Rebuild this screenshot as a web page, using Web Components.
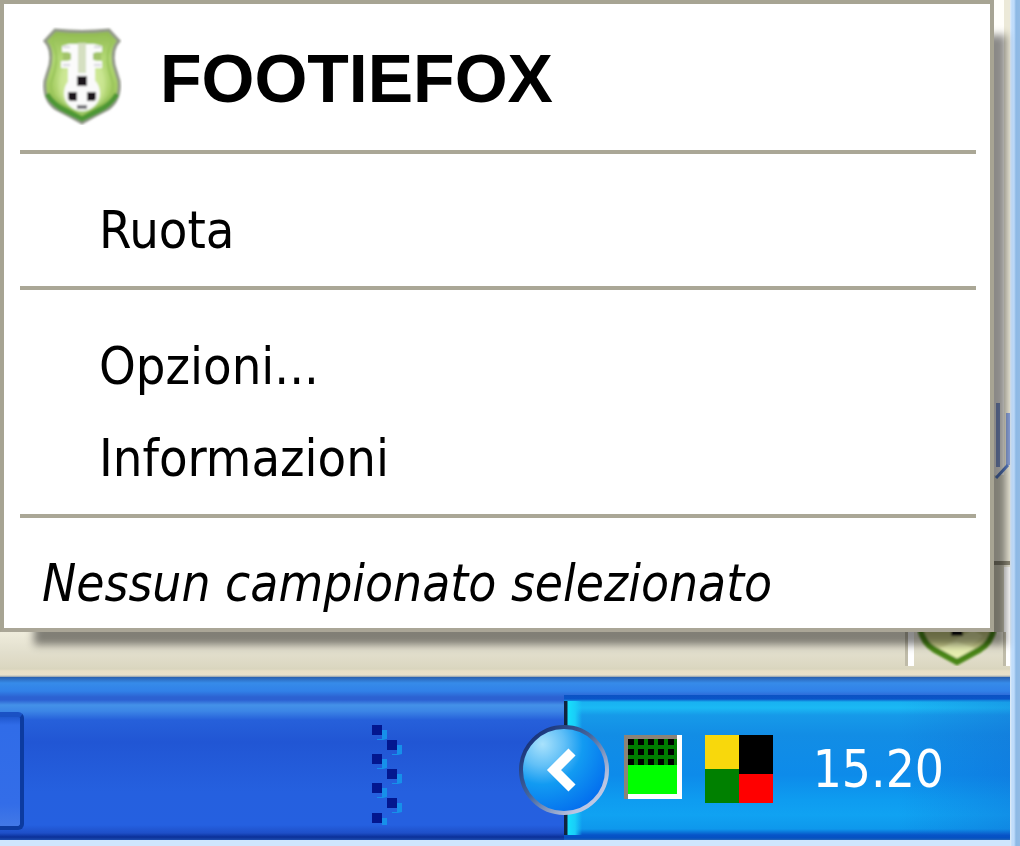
<!DOCTYPE html>
<html lang="it">
<head>
<meta charset="utf-8">
<title>FootieFox</title>
<style>
body { margin: 0; font-family: "DejaVu Sans Condensed", "DejaVu Sans", sans-serif; font-size: 51px; color: #000; }
</style>
</head>
<body>
<xp-desktop>
  <xp-menu slot="menu">
    <menu-header>FOOTIEFOX</menu-header>
    <menu-separator></menu-separator>
    <menu-item>Ruota</menu-item>
    <menu-separator></menu-separator>
    <menu-item>Opzioni...</menu-item>
    <menu-item>Informazioni</menu-item>
    <menu-separator></menu-separator>
    <menu-note>Nessun campionato selezionato</menu-note>
  </xp-menu>
  <status-bar slot="status"></status-bar>
  <task-bar slot="taskbar">
    <system-tray>15.20</system-tray>
  </task-bar>
</xp-desktop>

<script>
const define = (name, html) => customElements.define(name, class extends HTMLElement {
  constructor() {
    super();
    const t = document.createElement('template');
    t.innerHTML = html;
    this.attachShadow({ mode: 'open' }).append(t.content.cloneNode(true));
  }
});

define('xp-desktop', `
<style>
  :host { display: grid; grid-template-columns: minmax(0, 1fr) 10px; min-height: 100vh; background: #cfe6fd; }
  main { display: flex; flex-direction: column; min-width: 0; }
  .stage { position: relative; padding-right: 16px; background: #fffefb; }
  .behind { position: absolute; top: 0; right: 0; bottom: 0; width: 16px; }
  .behind svg { display: block; width: 16px; height: 100%; }
  .edge { background: linear-gradient(90deg, #e3edf5 0, #bfdcfb 2px, #bfdcfb 4px, #8db9e5 6px, #92bbe5 100%); }
  slot[name=menu]::slotted(*) { position: relative; z-index: 1; }
</style>
<main>
  <div class="stage">
    <div class="behind" aria-hidden="true">
      <svg viewBox="0 0 16 632" preserveAspectRatio="none">
        <rect width="16" height="632" fill="#fffefa"/>
        <rect x="10" width="6" height="632" fill="#ece9d8"/>
        <rect y="475" width="16" height="88" fill="#ece9d8"/>
        <path d="M2 403h4v64h-4zM12 413h4v52h-4z" fill="#8ba3dc"/>
        <path d="M2 478l12-13" stroke="#5b80cc" stroke-width="3"/>
        <rect y="561" width="16" height="4" fill="#8f8b78"/>
        <rect y="565" width="10" height="67" fill="#d4d1bd"/>
        <rect x="10" y="567" width="6" height="65" fill="#fff"/>
      </svg>
    </div>
    <slot name="menu"></slot>
  </div>
  <slot name="status"></slot>
  <slot name="taskbar"></slot>
</main>
<div class="edge"></div>`);

define('xp-menu', `
<style>
  :host { display: block; box-sizing: border-box; background: #fff; border: 4px solid #a7a493; border-bottom-color: #aaa697;
    padding: 0 14px 8px 16px; box-shadow: 23px 24px 8px -11px rgba(0,0,0,.46); }
</style>
<div role="menu"><slot></slot></div>`);

const crest = `
<svg viewBox="0 0 80 98" aria-hidden="true">
  <defs>
    <linearGradient id="g" x1="0" y1="0" x2="0" y2="1">
      <stop offset="0" stop-color="#8eb84e"/><stop offset=".3" stop-color="#b2d874"/>
      <stop offset=".7" stop-color="#a0c95c"/><stop offset="1" stop-color="#2f8024"/>
    </linearGradient>
    <radialGradient id="h" cx=".5" cy=".6" r=".5">
      <stop offset="0" stop-color="#e6f6ae"/><stop offset=".7" stop-color="#d5eda0" stop-opacity=".7"/><stop offset="1" stop-color="#b3d873" stop-opacity="0"/>
    </radialGradient>
    <filter id="s"><feGaussianBlur stdDeviation="1.3"/></filter>
  </defs>
  <g filter="url(#s)">
    <path d="M13 3Q40 6 67 3L77 14Q69 22 72 38L77 54Q79 73 66 82Q54 88 40 96Q26 88 14 82Q1 73 3 54L8 38Q11 22 3 14Z" fill="url(#g)" stroke="#93988a" stroke-width="3"/>
    <path d="M16 10Q40 13 64 10L70 15Q63 26 67 43L71 57Q72 69 61 76L40 88L19 76Q8 69 9 57L13 43Q17 26 10 15Z" fill="url(#h)" stroke="#99c45a" stroke-width="2"/>
    <path d="M5 67Q12 79 24 84L40 92L56 84Q68 79 75 67" fill="none" stroke="#4d9734" stroke-width="5"/>
    <path d="M27 17H52L60 19V25H53V34H60V41H53V56H26V41H19V34H27V25H20V19Z" fill="#fbfbfb"/>
    <path d="M21 20H28M21 38H28M52 20H59M52 38H59" stroke="#d5d5dc" stroke-width="2"/>
    <path d="M21 26h8v7h-8zM51 26h8v7h-8z" fill="#a2c36a"/>
    <rect x="36" y="16" width="8" height="30" fill="#d5dfc1"/>
    <circle cx="40" cy="66" r="18" fill="#fafafa"/>
    <path d="M35 49h10v10h-10zM26 65h9v9h-7l-2-2zM45 65h9v7l-2 2h-7z" fill="#1b181f"/>
    <rect x="35" y="78" width="10" height="4" fill="#77777c"/>
  </g>
</svg>`;

define('menu-header', `
<style>
  :host { display: flex; align-items: center; padding: 8px 0 0 22px; gap: 38px; line-height: 128px; }
  svg { display: block; width: 80px; height: 98px; }
  h1 { margin: 0; padding-top: 4px; font: bold 68px/124px "Liberation Sans", Arial, sans-serif; white-space: nowrap; }
</style>
${crest}<h1><slot></slot></h1>`);

define('menu-separator', `
<style>
  :host { display: block; margin: 10px 0 30px; }
  hr { border: 0; margin: 0; height: 4px; background: #aaa796; }
</style>
<hr>`);

define('menu-item', `
<style>
  :host { display: block; }
  button { display: block; width: 100%; border: 0; background: none; margin: 0; padding: 0 0 0 79px;
    text-align: left; font: inherit; font-size: 52px; line-height: 92px; color: inherit; white-space: nowrap; }
</style>
<button type="button" role="menuitem"><slot></slot></button>`);

define('menu-note', `
<style>
  :host { display: block; padding-left: 22px; line-height: 72px; font-style: italic; white-space: nowrap; }
</style>
<slot></slot>`);

define('status-bar', `
<style>
  :host { display: flex; justify-content: flex-end; height: 45px; overflow: hidden;
    background: linear-gradient(#efecdc 0, #e2dfcd 20px, #dcd8c2 34px, #d9d5be 37px, #e8dfc6 39px, #e9e1ca 43px, #8d9dae 45px); }
  .panel { display: flex; align-items: flex-end; height: 34px; border-left: 3px solid #bfbba8; padding-left: 9px; gap: 6px;
    background: linear-gradient(90deg, #fff 6px, transparent 6px); }
  svg { display: block; width: 80px; height: 98px; }
  .end { width: 4px; height: 34px; border-left: 3px solid #bfbba8; background: #fff; }
</style>
<div class="panel">
  <svg viewBox="0 0 80 98" aria-hidden="true">
    <defs>
      <filter id="f"><feGaussianBlur stdDeviation="1.3"/></filter>
      <linearGradient id="c" x1="0" y1="0" x2="0" y2="1"><stop offset="0" stop-color="#9a9d50"/><stop offset="1" stop-color="#eef3b4"/></linearGradient>
    </defs>
    <g filter="url(#f)">
      <path d="M2 40Q0 72 13 82L40 96L67 82Q80 72 78 40Z" fill="url(#c)"/>
      <path d="M30 76L56 62L66 68L40 90Z" fill="#d9dd9d"/>
      <path d="M22 80L40 74L58 80L40 91Z" fill="#e7eeb0"/>
      <path d="M2 56Q5 75 18 82L40 94L62 82Q75 75 78 56" fill="none" stroke="#4a8614" stroke-width="6"/>
      <rect x="34" y="58" width="12" height="10" fill="#0b0c08"/>
    </g>
  </svg>
  <div class="end"></div>
</div>`);

define('task-bar', `
<style>
  :host { display: flex; align-items: stretch; height: 163px;
    background: linear-gradient(#295fae 0, #368be9 6px, #3181e8 14px, #2c62d2 20px, #2c61d2 23px, #4491e8 28px, #3c86e6 34px, #2660da 43px, #2156d4 65px, #2560df 115px, #2560e0 148px, #1e4fc8 156px, #0b3099 160px, #1d4bad 163px); }
  .task { box-sizing: border-box; width: 24px; height: 118px; margin: 35px 0 0; padding: 0; border: solid #0c3ba0; border-width: 5px 4px 4px 0;
    border-radius: 0 6px 6px 0; background: linear-gradient(#1f58cf 0, #306ce8 8px, #336de8 80%, #4278e6); border-top-color: #1a51c4; }
  .fill { flex: 1; display: flex; justify-content: flex-end; padding: 48px 160px 0 0; }
  svg { display: block; width: 32px; height: 100px; }
</style>
<button class="task" type="button" aria-label="Finestra"></button>
<div class="fill">
  <svg viewBox="0 0 32 100" aria-hidden="true">
    <defs><g id="d"><path d="M5 14h5v-9h5v9l-4 1h-6z" fill="#1690ea"/><rect width="10" height="10" fill="#03178f"/></g></defs>
    <use href="#d"/><use href="#d" x="15" y="15"/><use href="#d" y="29"/><use href="#d" x="15" y="44"/>
    <use href="#d" y="58"/><use href="#d" x="15" y="73"/><use href="#d" y="88"/>
  </svg>
</div>
<slot></slot>`);

define('system-tray', `
<style>
  :host { position: relative; display: flex; align-items: flex-start; box-sizing: border-box; margin-top: 18px; padding: 40px 66px 0 60px; color: #fff;
    background: linear-gradient(90deg, #10243f 3px, #17dffc 4px, #19cef8 11px, transparent 18px, transparent 75%, rgba(20,90,200,.25)) 0 6px / 100% 134px no-repeat,
      linear-gradient(#0a53c4 0, #0b54c8 4px, #18b2f1 7px, #1bb9f4 13px, #169ae9 20px, #128de5 40px, #0d8bea 80px, #0e9cf0 105px, #10a2f2 120px, #0e98ec 134px, #0754c8 140px, #0450c2 143px, #2465b8 145px); }
  button { position: absolute; left: -45px; top: 30px; width: 90px; height: 90px; padding: 0; border: 0; background: none; }
  svg { display: block; }
  .monitor { width: 58px; height: 64px; }
  .squares { width: 68px; height: 68px; margin: 0 40px 0 23px; }
  time { line-height: 70px; white-space: nowrap; }
</style>
<button type="button" aria-label="Mostra icone nascoste">
  <svg viewBox="0 0 90 90" aria-hidden="true">
    <defs>
      <radialGradient id="b" cx=".25" cy=".2" r=".85"><stop offset="0" stop-color="#a9e2fc"/><stop offset=".3" stop-color="#62c0f7"/><stop offset=".55" stop-color="#129bf2"/><stop offset="1" stop-color="#0470ee"/></radialGradient>
      <linearGradient id="r" x1="0" y1="0" x2="1" y2="1"><stop offset="0" stop-color="#07206e"/><stop offset=".45" stop-color="#45669c"/><stop offset=".8" stop-color="#b9c4e2"/><stop offset="1" stop-color="#c8d0e8"/></linearGradient>
    </defs>
    <circle cx="45" cy="45" r="43" fill="url(#b)" stroke="url(#r)" stroke-width="4"/>
    <path d="M53 27L35 45L53 63" fill="none" stroke="#fff" stroke-width="10"/>
  </svg>
</button>
<svg class="monitor" viewBox="0 0 58 64" aria-hidden="true">
  <defs><pattern id="p" width="10" height="10" patternUnits="userSpaceOnUse" x="4" y="4"><rect width="6" height="6"/></pattern></defs>
  <rect width="58" height="64" fill="#fff"/>
  <path d="M0 0H53V4H4V64H0Z" fill="#8c8378"/>
  <rect x="4" y="4" width="49" height="26" fill="#007f00"/>
  <rect x="4" y="4" width="47" height="26" fill="url(#p)"/>
  <rect x="4" y="30" width="49" height="29" fill="#0f0"/>
</svg>
<svg class="squares" viewBox="0 0 68 68" aria-hidden="true">
  <rect width="34" height="34" fill="#f8d80c"/><rect x="34" width="34" height="39"/>
  <rect y="34" width="34" height="34" fill="#008000"/><rect x="34" y="39" width="34" height="29" fill="#f00"/>
</svg>
<time datetime="15:20"><slot></slot></time>`);
</script>
</body>
</html>
